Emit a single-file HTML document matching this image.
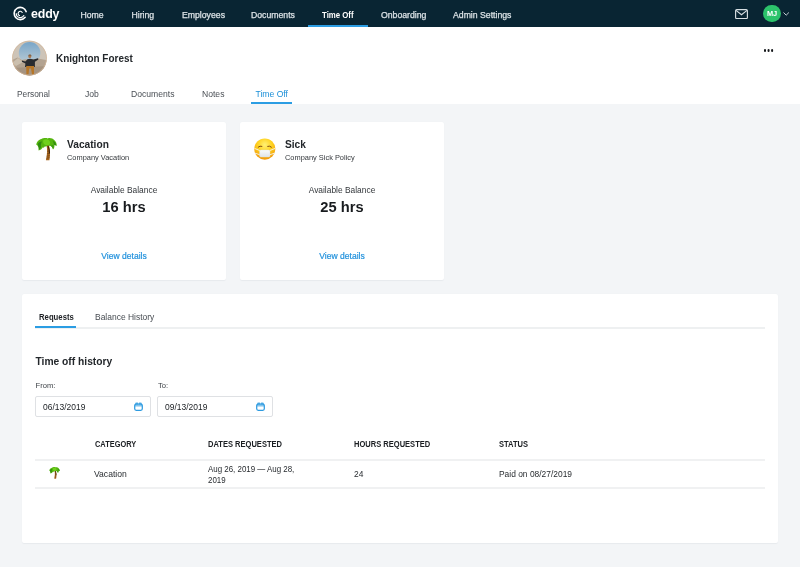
<!DOCTYPE html>
<html>
<head>
<meta charset="utf-8">
<title>Time Off</title>
<style>
*{box-sizing:border-box;margin:0;padding:0}
html,body{width:800px;height:567px;overflow:hidden}
html{background:#f3f5f7}
body{font-family:"Liberation Sans",sans-serif;background:#f3f5f7;color:#2b2f33;position:relative;font-size:9px;will-change:transform}
.abs{position:absolute;white-space:nowrap}
.sx{transform-origin:0 50%}
#nav{position:absolute;left:0;top:0;width:800px;height:27px;background:#092533;box-shadow:0 0.5px 0 #5d6c75}
#nav .it{position:absolute;top:0;height:27px;line-height:30px;color:#dbe2e6;-webkit-text-stroke:0.25px #dbe2e6;font-size:8.7px;white-space:nowrap}
#nav .it.act{color:#fff;font-weight:bold;-webkit-text-stroke:0;transform:scaleX(0.9);transform-origin:0 50%}
#nav .ul{position:absolute;left:308px;top:25px;width:60px;height:2px;background:#2b9de3}
#hdr{position:absolute;left:0;top:27px;width:800px;height:77px;background:#fff}
.tab{position:absolute;top:87.5px;font-size:8.6px;color:#4a4f55;line-height:12px;white-space:nowrap}
.tab.act{color:#1b8fd8}
.card{position:absolute;background:#fff;border-radius:2px;box-shadow:0 0.6px 1px rgba(20,40,60,0.05)}
.ctr{position:absolute;left:0;width:100%;text-align:center;white-space:nowrap}
.link{color:#1f90dc;-webkit-text-stroke:0.2px #1f90dc}
.th{position:absolute;top:145.2px;font-size:8.4px;font-weight:bold;line-height:10px;color:#1b1e22;white-space:nowrap;transform:scaleX(0.9);transform-origin:0 50%}
</style>
</head>
<body>
<div id="nav">
  <svg class="abs" style="left:12px;top:6px" width="16" height="16" viewBox="0 0 16 16" fill="none" stroke="#fff" stroke-linecap="round">
    <path d="M14.1 5.6A6.1 6.1 0 1 0 13.1 11.26" stroke-width="1.6"/>
    <path d="M4.2 7.5A4.1 4.1 0 0 0 11.85 9.55" stroke-width="1.1"/>
    <path d="M10.2 6.4A2.2 2.2 0 1 0 7.55 9.57" stroke-width="1.1"/>
  </svg>
  <div class="abs" style="left:31px;top:0;height:27px;line-height:28.5px;color:#fff;font-weight:bold;font-size:12.4px;letter-spacing:-0.15px">eddy</div>
  <div class="it" style="left:80.5px">Home</div>
  <div class="it" style="left:131.5px">Hiring</div>
  <div class="it" style="left:182px">Employees</div>
  <div class="it" style="left:251px">Documents</div>
  <div class="it act" style="left:322px">Time Off</div>
  <div class="it" style="left:381px">Onboarding</div>
  <div class="it" style="left:453px">Admin Settings</div>
  <div class="ul"></div>
  <svg class="abs" style="left:735px;top:8.8px" width="13" height="10.2" viewBox="0 0 13 10.2" fill="none" stroke="#d8dfe3" stroke-width="1.15">
    <rect x="0.6" y="0.6" width="11.8" height="9" rx="1.2"/>
    <path d="M1 1.4L6.5 5.8L12 1.4"/>
  </svg>
  <div class="abs" style="left:763.2px;top:4.7px;width:17.8px;height:17.8px;border-radius:50%;background:#2cc36b;color:#fff;font-weight:bold;font-size:7.4px;line-height:18.4px;text-align:center">MJ</div>
  <svg class="abs" style="left:783.2px;top:11.6px" width="6.4" height="4" viewBox="0 0 6.4 4" fill="none" stroke="#c7d0d6" stroke-width="1"><path d="M0.5 0.5L3.2 3.2L5.9 0.5"/></svg>
</div>

<div id="hdr"></div>
<!-- avatar -->
<svg class="abs" style="left:8px;top:36px" width="44" height="44" viewBox="0 0 44 44">
  <defs>
    <clipPath id="av"><circle cx="21.5" cy="22.1" r="17.3"/></clipPath>
    <linearGradient id="sky" x1="0" y1="0" x2="0" y2="1"><stop offset="0" stop-color="#78a5c8"/><stop offset="1" stop-color="#bccdd6"/></linearGradient>
  </defs>
  <g clip-path="url(#av)">
    <rect width="44" height="44" fill="#cdc4b8"/>
    <ellipse cx="21.6" cy="17" rx="10.8" ry="11" fill="url(#sky)"/>
    <path d="M4 24L9.5 21.5L14 24L17 23.3L26 23.3L30 22.5L40 24.5L40 44L4 44Z" fill="#b3a391"/>
    <path d="M4 27L10 22L15 26L8 30Z" fill="#cbbfae"/>
    <path d="M4 32L40 30L40 44L4 44Z" fill="#a59380"/>
    <path d="M14 24.6L17.3 25.6L19.5 23.2L22 22.7L25.5 23.4L30 22.3L30.4 23.4L26.9 25.8L26.9 31L17 31L17.4 27.4L13.9 25.8Z" fill="#292b2f"/>
    <circle cx="21.8" cy="20.6" r="1.5" fill="#a9774d"/>
    <path d="M20 19.8L23.8 19.8L22.6 18.4L21 18.4Z" fill="#7c5a3a"/>
    <path d="M18.2 30L26 30L26 38.5L24 38.5L23 32.5L21.2 32.5L20.5 38.5L18.4 38.5Z" fill="#b67628"/>
  </g>
  <circle cx="21.5" cy="22.1" r="17" fill="none" stroke="#d6b696" stroke-width="0.7"/>
</svg>
<div class="abs sx" style="left:56.2px;top:51.4px;font-size:10.7px;font-weight:bold;line-height:14px;color:#23272b;transform:scaleX(0.93)">Knighton Forest</div>
<div class="abs" style="left:763.9px;top:49.4px;width:2.4px;height:2.4px;border-radius:50%;background:#15181b;box-shadow:3.55px 0 0 #15181b,7.1px 0 0 #15181b"></div>
<div class="tab" style="left:17px;font-size:8.35px">Personal</div>
<div class="tab" style="left:85px">Job</div>
<div class="tab" style="left:131px">Documents</div>
<div class="tab" style="left:202px">Notes</div>
<div class="tab act" style="left:255.5px">Time Off</div>
<div class="abs" style="left:250.5px;top:102.2px;width:41.5px;height:1.8px;background:#2b9de3"></div>

<!-- Vacation card -->
<div class="card" style="left:21.7px;top:122px;width:204.5px;height:158.2px"></div>
<div class="abs" style="left:22px;top:122px;width:204px;height:158px">
  <svg class="abs" style="left:8px;top:10px" width="34" height="34" viewBox="0 0 34 34">
    <path d="M16.4 13C17.5 17 17.3 23 15.9 28.2L19.4 28.2C20.5 23 20.2 17 18.8 12.8Z" fill="#a8651c"/>
    <path d="M18.3 13.2C19.6 16.5 20.2 19 20 21.5L18.9 21.5C19 18.5 18.3 16 17.3 13.4Z" fill="#3f2612"/>
    <path d="M16.4 24.2L19.7 23.6M16.2 26.2L19.6 25.7M16.9 21.8L19.9 21.4M17.2 19.4L19.9 19" stroke="#5a3413" stroke-width="0.5"/>
    <path d="M6.3 12.8C6.5 10 9 7.5 11.4 7C13 5.8 16 5.6 17.8 6.4C20 5.6 23 6.5 24.2 8C26 9.5 27 12 26.7 14C25.8 13.2 25 13 24.4 13.2C24.6 15 24 16.8 23 17.5C22.5 15.8 21.8 14.6 20.8 14C19.8 13.6 18.6 13.6 17.6 13.4C16.5 14.2 15.5 14.6 14.6 14.6C14.4 15.6 13.6 16 12.6 15.6C12 17 10.4 18.4 8.6 18.5C8.8 17 8.6 15.4 8 14.6C7.6 13.6 7 13 6.3 12.8Z" fill="#55b50f"/>
    <path d="M13.5 8C15 7 17.5 7 19 8.2C20.5 9.5 20.5 12 19 13C17.5 13.6 15 13.4 14 12C13 11 12.8 9 13.5 8Z" fill="#6fd11c"/>
    <path d="M8 11.5C9 10 10.5 9.3 12 9.4C11 11 10.6 13 11 15C10.6 16.3 9.8 17.4 8.8 17.8C9 16 8.8 14.8 8.2 14C8 13.2 7.8 12.4 8 11.5Z" fill="#2f8a12"/>
    <path d="M22.5 8.5C24.5 9.5 26 11.5 26.3 13.4C25.5 12.8 24.8 12.7 24 12.9C23.8 11.2 23.3 9.8 22.5 8.5Z" fill="#2f8a12"/>
    <path d="M20.8 13.9C21.6 13 22.6 12.8 23.6 13.2C23.8 14.8 23.5 16 23 16.9C22.6 15.6 21.8 14.5 20.8 13.9Z" fill="#3d9c14"/>
  </svg>
  <div class="abs sx" style="left:45px;top:14.7px;font-size:10.9px;font-weight:bold;line-height:14px;color:#23272b;transform:scaleX(0.935)">Vacation</div>
  <div class="abs sx" style="left:45px;top:31.3px;font-size:7.95px;line-height:9px;color:#34383c;transform:scaleX(0.935)">Company Vacation</div>
  <div class="ctr" style="top:62.9px;font-size:8.8px;line-height:10px;color:#33373b;transform:scaleX(0.955)">Available Balance</div>
  <div class="ctr" style="top:75.2px;font-size:15.3px;font-weight:bold;line-height:20px;color:#181b1e;transform:scaleX(0.96)">16 hrs</div>
  <div class="ctr link" style="top:128.8px;font-size:8.55px;line-height:10px">View details</div>
</div>

<!-- Sick card -->
<div class="card" style="left:239.7px;top:122px;width:204.5px;height:158.2px"></div>
<div class="abs" style="left:240px;top:122px;width:204px;height:158px">
  <svg class="abs" style="left:8px;top:10px" width="34" height="34" viewBox="0 0 34 34">
    <defs>
      <radialGradient id="fc" cx="0.5" cy="0.3" r="0.75"><stop offset="0" stop-color="#fff176"/><stop offset="0.45" stop-color="#ffd21f"/><stop offset="1" stop-color="#ee8d08"/></radialGradient>
      <linearGradient id="mk" x1="0" y1="0" x2="0" y2="1"><stop offset="0" stop-color="#fafbfc"/><stop offset="1" stop-color="#dfe3e7"/></linearGradient>
    </defs>
    <circle cx="16.8" cy="17.1" r="10.6" fill="url(#fc)"/>
    <path d="M6.5 16.4L11.9 18.6M6.6 21L11.9 22.8M27.1 16.4L21.7 18.6M27 21L21.7 22.8" stroke="#f4f4f0" stroke-width="0.9"/>
    <rect x="11.6" y="18" width="10.4" height="7" rx="1.3" fill="url(#mk)" stroke="#d9dde1" stroke-width="0.4"/>
    <path d="M10.2 15.1Q12 13.5 13.9 14.3M19.7 14.3Q21.6 13.5 23.4 15.1" fill="none" stroke="#7a4512" stroke-width="0.95" stroke-linecap="round"/>
  </svg>
  <div class="abs sx" style="left:45px;top:14.7px;font-size:10.9px;font-weight:bold;line-height:14px;color:#23272b;transform:scaleX(0.935)">Sick</div>
  <div class="abs sx" style="left:45px;top:31.3px;font-size:7.95px;line-height:9px;color:#34383c;transform:scaleX(0.935)">Company Sick Policy</div>
  <div class="ctr" style="top:62.9px;font-size:8.8px;line-height:10px;color:#33373b;transform:scaleX(0.955)">Available Balance</div>
  <div class="ctr" style="top:75.2px;font-size:15.3px;font-weight:bold;line-height:20px;color:#181b1e;transform:scaleX(0.96)">25 hrs</div>
  <div class="ctr link" style="top:128.8px;font-size:8.55px;line-height:10px">View details</div>
</div>

<!-- Requests panel -->
<div class="card" style="left:21.6px;top:294.2px;width:756.4px;height:248.4px"></div>
<div class="abs" style="left:22px;top:294px;width:756px;height:248px">
  <div class="abs sx" style="left:16.6px;top:18px;font-size:8.5px;font-weight:bold;line-height:10px;color:#1d2024;transform:scaleX(0.91)">Requests</div>
  <div class="abs sx" style="left:72.5px;top:18px;font-size:8.8px;line-height:10px;color:#474c52;transform:scaleX(0.962)">Balance History</div>
  <div class="abs" style="left:13px;top:33px;width:730px;height:2px;background:#eef0f1"></div>
  <div class="abs" style="left:13px;top:32px;width:41px;height:2px;background:#2b9de3"></div>
  <div class="abs" style="left:13.5px;top:60.5px;font-size:10.25px;font-weight:bold;line-height:13px;color:#23272b">Time off history</div>
  <div class="abs" style="left:13.5px;top:86.8px;font-size:7.6px;line-height:9px;color:#3c4146">From:</div>
  <div class="abs" style="left:136px;top:86.8px;font-size:7.6px;line-height:9px;color:#3c4146">To:</div>
  <div class="abs" style="left:13px;top:102px;width:116px;height:21px;border:1px solid #dfe1e4;border-radius:2px"></div>
  <div class="abs" style="left:135px;top:102px;width:116px;height:21px;border:1px solid #dfe1e4;border-radius:2px"></div>
  <div class="abs" style="left:20.5px;top:107.7px;font-size:9.3px;line-height:10px;color:#202428;transform:scaleX(0.91);transform-origin:0 50%">06/13/2019</div>
  <div class="abs" style="left:142.5px;top:107.7px;font-size:9.3px;line-height:10px;color:#202428;transform:scaleX(0.91);transform-origin:0 50%">09/13/2019</div>
  <svg class="abs" style="left:111.9px;top:107.8px" width="9" height="9.2" viewBox="0 0 9 9.2" fill="none" stroke="#2e9be0"><rect x="0.7" y="2.1" width="7.6" height="6.2" rx="1.5" stroke-width="1.25"/><path d="M1 3.85H8" stroke-width="0.9"/><path d="M1.1 2.4V2Q1.1 0.6 2.5 0.6H3.6Q4.2 0.6 4.2 1.3V2.4ZM4.8 2.4V1.3Q4.8 0.6 5.4 0.6H6.5Q7.9 0.6 7.9 2V2.4Z" fill="#2e9be0" stroke="none" opacity="0.8"/></svg>
  <svg class="abs" style="left:234.4px;top:107.8px" width="9" height="9.2" viewBox="0 0 9 9.2" fill="none" stroke="#2e9be0"><rect x="0.7" y="2.1" width="7.6" height="6.2" rx="1.5" stroke-width="1.25"/><path d="M1 3.85H8" stroke-width="0.9"/><path d="M1.1 2.4V2Q1.1 0.6 2.5 0.6H3.6Q4.2 0.6 4.2 1.3V2.4ZM4.8 2.4V1.3Q4.8 0.6 5.4 0.6H6.5Q7.9 0.6 7.9 2V2.4Z" fill="#2e9be0" stroke="none" opacity="0.8"/></svg>
  <div class="th" style="left:72.6px;transform:scaleX(0.885)">CATEGORY</div>
  <div class="th" style="left:186px">DATES REQUESTED</div>
  <div class="th" style="left:332px">HOURS REQUESTED</div>
  <div class="th" style="left:476.8px">STATUS</div>
  <div class="abs" style="left:13px;top:165px;width:730px;height:2px;background:#f0f1f2"></div>
  <svg class="abs" style="left:23.7px;top:169.8px" width="17.7" height="17.7" viewBox="0 0 34 34">
    <path d="M16.4 13C17.5 17 17.3 23 15.9 28.2L19.4 28.2C20.5 23 20.2 17 18.8 12.8Z" fill="#a8651c"/>
    <path d="M18.3 13.2C19.6 16.5 20.2 19 20 21.5L18.9 21.5C19 18.5 18.3 16 17.3 13.4Z" fill="#3f2612"/>
    <path d="M16.4 24.2L19.7 23.6M16.2 26.2L19.6 25.7M16.9 21.8L19.9 21.4M17.2 19.4L19.9 19" stroke="#5a3413" stroke-width="0.5"/>
    <path d="M6.3 12.8C6.5 10 9 7.5 11.4 7C13 5.8 16 5.6 17.8 6.4C20 5.6 23 6.5 24.2 8C26 9.5 27 12 26.7 14C25.8 13.2 25 13 24.4 13.2C24.6 15 24 16.8 23 17.5C22.5 15.8 21.8 14.6 20.8 14C19.8 13.6 18.6 13.6 17.6 13.4C16.5 14.2 15.5 14.6 14.6 14.6C14.4 15.6 13.6 16 12.6 15.6C12 17 10.4 18.4 8.6 18.5C8.8 17 8.6 15.4 8 14.6C7.6 13.6 7 13 6.3 12.8Z" fill="#55b50f"/>
    <path d="M13.5 8C15 7 17.5 7 19 8.2C20.5 9.5 20.5 12 19 13C17.5 13.6 15 13.4 14 12C13 11 12.8 9 13.5 8Z" fill="#6fd11c"/>
    <path d="M8 11.5C9 10 10.5 9.3 12 9.4C11 11 10.6 13 11 15C10.6 16.3 9.8 17.4 8.8 17.8C9 16 8.8 14.8 8.2 14C8 13.2 7.8 12.4 8 11.5Z" fill="#2f8a12"/>
    <path d="M22.5 8.5C24.5 9.5 26 11.5 26.3 13.4C25.5 12.8 24.8 12.7 24 12.9C23.8 11.2 23.3 9.8 22.5 8.5Z" fill="#2f8a12"/>
    <path d="M20.8 13.9C21.6 13 22.6 12.8 23.6 13.2C23.8 14.8 23.5 16 23 16.9C22.6 15.6 21.8 14.5 20.8 13.9Z" fill="#3d9c14"/>
  </svg>
  <div class="abs sx" style="left:72.1px;top:174.9px;font-size:9.2px;line-height:10px;color:#282c30;transform:scaleX(0.935)">Vacation</div>
  <div class="abs" style="left:186px;top:169.7px;font-size:8.75px;line-height:11.6px;color:#282c30;white-space:normal;width:106px;transform:scaleX(0.905);transform-origin:0 50%">Aug 26, 2019 — Aug 28, 2019</div>
  <div class="abs sx" style="left:332px;top:175.1px;font-size:9px;line-height:10px;color:#282c30;transform:scaleX(0.935)">24</div>
  <div class="abs sx" style="left:477px;top:175.1px;font-size:9px;line-height:10px;color:#282c30;transform:scaleX(0.935)">Paid on 08/27/2019</div>
  <div class="abs" style="left:13px;top:193px;width:730px;height:2px;background:#f0f1f2"></div>
</div>
</body>
</html>
